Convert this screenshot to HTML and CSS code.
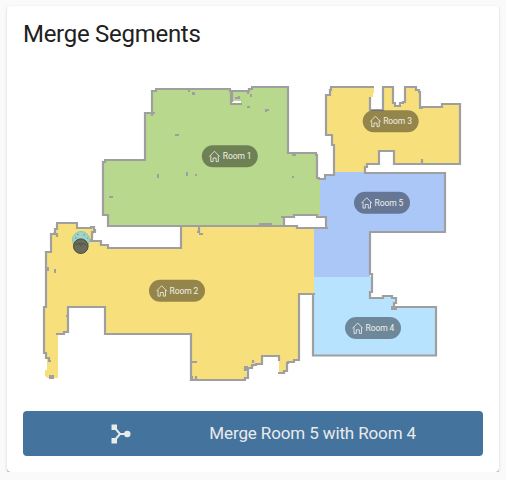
FILE: index.html
```
<!DOCTYPE html>
<html lang="en">
<head>
<meta charset="utf-8">
<title>Merge Segments</title>
<link rel="stylesheet" href="styles.css">
</head>
<body>
<main class="card">
<h1 class="title">Merge Segments</h1>
<svg class="map" viewBox="23 64 460 330" role="img" aria-label="Floor map">
<defs>
<g id="pill">
<rect class="pill" x="-28" y="-11" width="56" height="22" rx="11"/>
<path class="house" d="M-20.500 0.400L-15.300-5L-10.100 0.400M-19-.6V5.400H-16.700V1.800H-13.700V5.400H-11.500V-.6"/>
</g>
</defs>
<g shape-rendering="crispEdges">
<path class="yellow" d="M57 223H77V228H95L92 240L101 241V245H108V248H181V226H314V294H299V359L294 360L288 363L287 370L284 373H279V356H262V363L256 364L252 368L245 367L248 377L245 380H191V334H105V307H68V331L58 335V378H47L45 376V370H47V359L44 353V307L46 306V252L51 250V234L57 228Z"/>
<path class="green" d="M156 89H229L231 91H249V89L252 87H288V153H316L317 177L320 179V217H284V226H108V215H103V162L105 160H145V113H152V91Z"/>
<path class="yellow" d="M331 87H374V90L373 97H370V110H383V87H393V103L397 106H400L404 103V87H416L420 92V107H442V104H460V164H394V151H379V164H367L365 167V172H334V145H332V135H326V95H330Z"/>
<path class="blue" d="M320 179H325V175H334V172H365V173H445V232H370V277H314V226H326V216H320Z"/>
<path class="cyan" d="M314 277H372V292H370V298H383V296H392V298H396V303L394 307H436V355H313V294H314Z"/>
<path class="white" d="M284 217H294V215H317V217H326V227H297V225H284ZM232 101H241V103H232Z"/>
</g>
<g class="walls">
<path d="M155 89H230V91H249V89H252V87H288V153H316V155H317V178H319V179H325V175H334V145H332V135H326V95H330V90H331V87H374M156 89V91H152V116M155 113H145V160H105V162H103V215H108V226H297V228H328M281 217H294V215H317V217H326V228M284 217V226"/>
<path d="M370 97V110H383V87H393V103H395V106H400V103H403V102H405V87H416V90H419V92H420V108H423M420 107H442V104H460V164H394V151H379V164H367V167H365V173H445V232H370V274H372V292H370V298H383V296H392V298H396V303H394V307H436V355.500H313V294M422 164V159"/>
<path d="M56 223H77V228H91V227H94V230H95V232H92V240H91V241H101V245H108V248H181V227M57 223V229H55V233M57 237V234H51V252H46V307H44V353H46V358H49V361H51M56 334H64V332H68V307H105V334H191V380H245V378H248V370H245V368H252V365H256V364H262V356H279V361M278 373H284V371H287V363H288V362H294V360H299V294H315M68 308V316H66"/>
<path d="M231 91V104H242M232 102V91M235 98H239V96M248 91V94M266 112V110H269M199 227V232H197M199 234H203M192 362H197M192 376V380M196 376V379M253 360V363"/>
</g>
<g class="specks" shape-rendering="crispEdges">
<path d="M188 90h2v2h-2zM192 92h3v3h-3zM175 134h4v2h-4zM157 174h2v4h-2zM186 172h2v4h-2zM195 174h2v2h-2zM109 196h4v2h-4zM247 106h3v2h-3zM250 94h2v3h-2zM292 154h4v2h-4zM292 176h2v2h-2zM259 223h13v3h-13zM46 267h3v4h-3zM54 269h2v4h-2zM49 375h5v4h-5zM244 366h4v3h-4zM391 306h6v4h-6z"/>
</g>
<circle class="dock" cx="81" cy="240" r="8.500"/>
<path class="dock-dots" d="M75 238h1.500M77 234.500h1.500M83.500 235h1.500M87 238h1"/>
<circle class="robot" cx="80.800" cy="246.200" r="7.300"/>
<path class="robot-mark" d="M75 244.500Q81 242 86.500 244.500M79 243.500L81 246L83 243.500"/>
<g class="label" transform="translate(229.800 156.200)"><use href="#pill"/><text x="-7" y="3.200">Room 1</text></g>
<g class="label" transform="translate(177 290.700)"><use href="#pill"/><text x="-7.500" y="3.200">Room 2</text></g>
<g class="label" transform="translate(390.700 121.200)"><use href="#pill"/><text x="-7.500" y="3.200">Room 3</text></g>
<g class="label" transform="translate(382 202.700)"><use href="#pill"/><text x="-7.500" y="3.200">Room 5</text></g>
<g class="label" transform="translate(373 328)"><use href="#pill"/><text x="-7.500" y="3.200">Room 4</text></g>
</svg>
<button class="action" type="button">
<svg class="merge" viewBox="0 0 20 20"><path class="links" d="M3 3L9 10H17M9 10L3 17"/><path d="M.5.5H6V6H.5zM.5 14H6V19.500H.5z"/><circle cx="16.300" cy="10" r="3.200"/></svg>
<span class="action-text">Merge Room 5 with Room 4</span>
</button>
</main>
</body>
</html>
```
FILE: styles.css
```
* { box-sizing: border-box; }
body { margin: 0; background: #fafafa; font-family: Roboto, sans-serif; }
.card {
  margin: 6px 7px 0;
  width: 492px;
  height: 466px;
  padding: 0 16px 16px;
  display: flex;
  flex-direction: column;
  background: #fff;
  border-radius: 4px;
  box-shadow: 0 1px 0 rgba(0, 0, 0, .32), 0 1px 3px rgba(0, 0, 0, .16);
}
.title { margin: 0; height: 58px; padding-top: 12px; font-size: 24px; line-height: 32px; font-weight: 400; letter-spacing: -.28px; color: #212121; }
.map { display: block; width: 460px; height: 330px; }
.yellow { fill: #f7df7c; }
.green { fill: #b8d88e; }
.blue { fill: #abc7f8; }
.cyan { fill: #b7e3ff; }
.white { fill: #fff; }
.walls { fill: none; stroke: #9f9f9f; stroke-width: 2.2; }
.specks { fill: #9f9f9f; }
.dock { fill: #a2d3c9; stroke: #83c8b5; }
.dock-dots { fill: none; stroke: #4a90b8; stroke-width: 1.2; }
.robot { fill: #6a6b5b; stroke: #44483c; }
.robot-mark { fill: none; stroke: #4b4f42; stroke-width: .8; }
.pill { fill: #000; fill-opacity: .4; }
.house { fill: none; stroke: #fff; stroke-opacity: .8; stroke-width: .9; }
.label text { font: 8.5px Roboto, sans-serif; letter-spacing: -.1px; fill: #f0f0e8; }
.action {
  display: flex;
  align-items: center;
  margin-top: 17px;
  height: 45px;
  flex: none;
  padding: 0 67px 0 88px;
  justify-content: space-between;
  border: 0;
  border-radius: 4px;
  background: #44739e;
  color: #e9ebeb;
  font: 17px Roboto, sans-serif;
}
.action-text { letter-spacing: -.12px; padding-bottom: 2px; }
.merge { width: 20px; height: 20px; fill: #e9ebeb; }
.links { fill: none; stroke: #e9ebeb; stroke-width: 2; }
```
